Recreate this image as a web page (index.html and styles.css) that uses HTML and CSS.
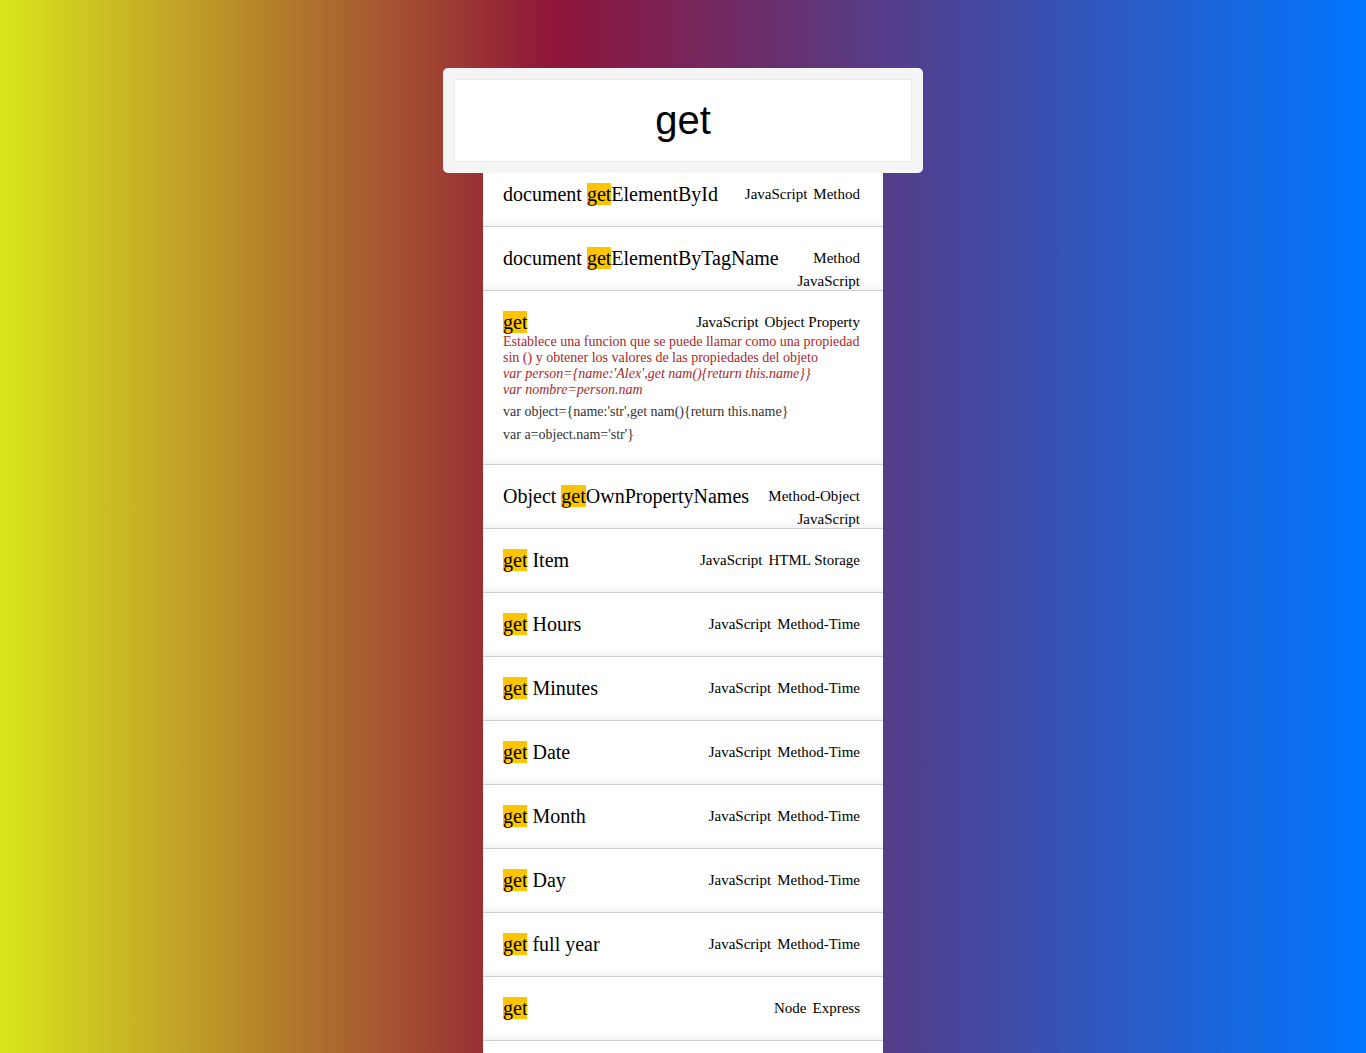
FILE: index.html
```html
<!DOCTYPE html>
<html lang="es">
<head>
<meta charset="utf-8">
<title>Buscador</title>
<link rel="stylesheet" href="styles.css">
</head>
<body>
<div class="page">
  <div class="search-card">
    <input class="search-input" type="text" value="get">
  </div>
  <ul class="results">
    <li class="row">
      <div class="row-head">
        <span class="title">document <mark class="hl">get</mark>ElementById</span>
        <span class="tags"><span class="tag">Method</span><span class="tag">JavaScript</span></span>
      </div>
    </li>
    <li class="row">
      <div class="row-head">
        <span class="title">document <mark class="hl">get</mark>ElementByTagName</span>
        <span class="tags"><span class="tag">Method</span><span class="tag">JavaScript</span></span>
      </div>
    </li>
    <li class="row row-detail">
      <div class="row-head">
        <span class="title"><mark class="hl">get</mark></span>
        <span class="tags"><span class="tag">Object Property</span><span class="tag">JavaScript</span></span>
      </div>
      <div class="desc">
        Establece una funcion que se puede llamar como una propiedad sin () y obtener los valores de las propiedades del objeto
        <em class="desc-code">var person={name:'Alex',get nam(){return this.name}}</em>
        <em class="desc-code">var nombre=person.nam</em>
      </div>
      <div class="code">var object={name:'str',get nam(){return this.name}</div>
      <div class="code">var a=object.nam='str'}</div>
    </li>
    <li class="row">
      <div class="row-head">
        <span class="title">Object <mark class="hl">get</mark>OwnPropertyNames</span>
        <span class="tags"><span class="tag">Method-Object</span><span class="tag">JavaScript</span></span>
      </div>
    </li>
    <li class="row">
      <div class="row-head">
        <span class="title"><mark class="hl">get</mark> Item</span>
        <span class="tags"><span class="tag">HTML Storage</span><span class="tag">JavaScript</span></span>
      </div>
    </li>
    <li class="row">
      <div class="row-head">
        <span class="title"><mark class="hl">get</mark> Hours</span>
        <span class="tags"><span class="tag">Method-Time</span><span class="tag">JavaScript</span></span>
      </div>
    </li>
    <li class="row">
      <div class="row-head">
        <span class="title"><mark class="hl">get</mark> Minutes</span>
        <span class="tags"><span class="tag">Method-Time</span><span class="tag">JavaScript</span></span>
      </div>
    </li>
    <li class="row">
      <div class="row-head">
        <span class="title"><mark class="hl">get</mark> Date</span>
        <span class="tags"><span class="tag">Method-Time</span><span class="tag">JavaScript</span></span>
      </div>
    </li>
    <li class="row">
      <div class="row-head">
        <span class="title"><mark class="hl">get</mark> Month</span>
        <span class="tags"><span class="tag">Method-Time</span><span class="tag">JavaScript</span></span>
      </div>
    </li>
    <li class="row">
      <div class="row-head">
        <span class="title"><mark class="hl">get</mark> Day</span>
        <span class="tags"><span class="tag">Method-Time</span><span class="tag">JavaScript</span></span>
      </div>
    </li>
    <li class="row">
      <div class="row-head">
        <span class="title"><mark class="hl">get</mark> full year</span>
        <span class="tags"><span class="tag">Method-Time</span><span class="tag">JavaScript</span></span>
      </div>
    </li>
    <li class="row">
      <div class="row-head">
        <span class="title"><mark class="hl">get</mark></span>
        <span class="tags"><span class="tag">Express</span><span class="tag">Node</span></span>
      </div>
    </li>
    <li class="row">
      <div class="row-head"></div>
    </li>
  </ul>
</div>
</body>
</html>
```

FILE: styles.css
```css
html {
  background: linear-gradient(90deg, #d9e61d 0%, #8f1539 40.6%, #0077ff 100%);
  min-height: 100%;
}

body {
  margin: 0;
  min-height: 1053px;
  background: linear-gradient(90deg, #d9e61d 0%, #8f1539 40.6%, #0077ff 100%);
  font-family: "Liberation Serif", "Times New Roman", serif;
  color: #000;
}

.page {
  padding-top: 68px;
}

.search-card {
  position: relative;
  z-index: 1;
  box-sizing: border-box;
  width: 480px;
  margin: 0 auto -10px;
  padding: 11px;
  background: #f5f5f5;
  border-radius: 5px;
}

.search-input {
  display: block;
  box-sizing: border-box;
  width: 100%;
  height: 83px;
  margin: 0;
  padding: 0;
  border: 1px solid #ececec;
  background: #fff;
  font-family: "Liberation Sans", Arial, sans-serif;
  font-size: 40px;
  color: #000;
  text-align: center;
  outline: none;
}

.results {
  list-style: none;
  width: 400px;
  margin: 0 auto;
  padding: 0;
  background: #fff;
}

.row {
  padding: 20px 23px 20px 20px;
  border-bottom: 1px solid #d0d0d0;
  box-shadow: inset 0 -12px 12px -12px rgba(0, 0, 0, 0.09);
  background: #fff;
}

.row-detail {
  padding-bottom: 21px;
}

.row-head {
  display: flex;
  justify-content: space-between;
  align-items: flex-start;
  height: 23px;
}

.title {
  flex: none;
  white-space: nowrap;
  font-size: 20px;
  line-height: 23px;
}

.hl {
  background: #ffc400;
  color: #000;
}

.tags {
  flex: 1 1 auto;
  min-width: 0;
  display: flex;
  flex-direction: row-reverse;
  flex-wrap: wrap;
  column-gap: 6px;
  margin-left: 8px;
  font-size: 15px;
  line-height: 23px;
}

.tag {
  white-space: nowrap;
}

.desc {
  font-size: 14px;
  line-height: 16px;
  color: #a52a2a;
}

.desc-code {
  display: block;
  font-style: italic;
}

.code {
  margin-top: 6px;
  font-size: 14px;
  line-height: 16px;
  color: #333;
}

.code + .code {
  margin-top: 7px;
}
```
